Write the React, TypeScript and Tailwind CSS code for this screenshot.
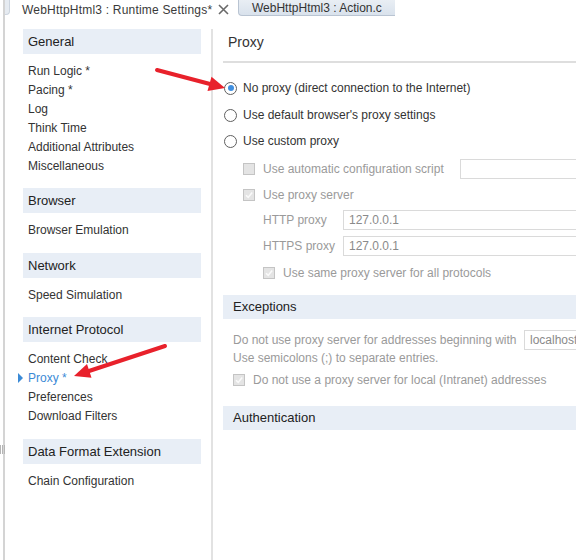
import React from "react";

const font = "font-['Liberation_Sans',Arial,sans-serif]";

function Radio({ checked, label }: { checked?: boolean; label: string }) {
  return (
    <div className="flex h-[26px] items-center pl-[1px]">
      <span className="flex h-[13px] w-[13px] shrink-0 items-center justify-center rounded-full border border-[#5f5f5f] bg-white">
        {checked && <span className="h-[6px] w-[6px] rounded-full bg-[#3f8fe0]" />}
      </span>
      <span className="ml-[6px] whitespace-nowrap text-[12px] leading-none text-[#333]">{label}</span>
    </div>
  );
}

function Check({ checked }: { checked?: boolean }) {
  return (
    <span className="flex h-[12px] w-[12px] shrink-0 items-center justify-center border border-[#c4c4c4] bg-[#e4e4e4]">
      {checked && (
        <svg width="10" height="10" viewBox="0 0 10 10">
          <path d="M2 5.2 L4.2 7.4 L8.2 2.6" fill="none" stroke="#fafafa" strokeWidth="1.6" />
        </svg>
      )}
    </span>
  );
}

function Input({ value, w }: { value?: string; w: string }) {
  return (
    <div className={`h-[20px] ${w} shrink-0 whitespace-nowrap border border-[#dadada] bg-white pl-[5px] text-[12px] leading-[18px] text-[#8a8a8a]`}>
      {value}
    </div>
  );
}

function Header({ title, cls }: { title: string; cls?: string }) {
  return (
    <div className={`flex h-[25px] items-center whitespace-nowrap bg-[#e8eef6] pl-[5px] text-[13px] text-[#222] ${cls ?? ""}`}>
      {title}
    </div>
  );
}

function Item({ label, active }: { label: string; active?: boolean }) {
  return (
    <div className={`relative h-[19px] whitespace-nowrap pl-[5px] text-[12px] leading-[19px] ${active ? "text-[#3b8ad6]" : "text-[#333]"}`}>
      {active && (
        <svg className="absolute left-[-5px] top-[4px]" width="5" height="10" viewBox="0 0 5 10">
          <path d="M0 0 L5 5 L0 10 Z" fill="#3b8ad6" />
        </svg>
      )}
      {label}
    </div>
  );
}

export default function App() {
  return (
    <div className={`relative h-[560px] w-[576px] overflow-hidden bg-white ${font}`}>
      <div className="flex h-full">
        <div className="w-[3px] shrink-0" />
        <div className="relative w-[2px] shrink-0 bg-[#d4d4d4]">
          <div className="absolute left-[-3px] top-[445px] flex gap-[1px]">
            <span className="h-[9px] w-[1px] bg-[#b5b5b5]" />
            <span className="h-[9px] w-[1px] bg-[#b5b5b5]" />
            <span className="h-[9px] w-[1px] bg-[#b5b5b5]" />
          </div>
        </div>
        <div className="flex min-w-0 flex-1 flex-col">
          {/* Tab bar */}
          <div className="flex h-[19px] shrink-0">
            <div className="h-[15px] w-[5px] rounded-br-[4px] border-b border-r border-[#cdd5df] bg-[#e6ebf1]" />
            <div className="flex w-[228px] shrink-0 items-center whitespace-nowrap pl-[12px] text-[12px] tracking-[0.2px] text-[#3a3a3a]">
              <span>WebHttpHtml3 : Runtime Settings*</span>
              <svg className="ml-[6px]" width="11" height="11" viewBox="0 0 11 11">
                <path d="M1 1 L10 10 M10 1 L1 10" stroke="#6a6a6a" strokeWidth="1.6" />
              </svg>
            </div>
            <div className="flex h-[16px] w-[157px] shrink-0 items-center whitespace-nowrap rounded-bl-[4px] border-b border-l border-[#b9c4d2] bg-gradient-to-b from-[#e9eef4] to-[#d9e2ec] pl-[13px] text-[12px] text-[#333]">
              WebHttpHtml3 : Action.c
            </div>
            <div className="flex-1" />
          </div>

          {/* Body */}
          <div className="flex min-h-0 flex-1 pt-[10px]">
            {/* Sidebar */}
            <div className="w-[208px] shrink-0 border-r-2 border-[#e2e2e2] pl-[18px] pr-[10px]">
              <Header title="General" />
              <div className="mb-[12px] mt-[8px]">
                <Item label="Run Logic *" />
                <Item label="Pacing *" />
                <Item label="Log" />
                <Item label="Think Time" />
                <Item label="Additional Attributes" />
                <Item label="Miscellaneous" />
              </div>
              <Header title="Browser" />
              <div className="mb-[13px] mt-[8px]">
                <Item label="Browser Emulation" />
              </div>
              <Header title="Network" />
              <div className="mb-[12px] mt-[8px]">
                <Item label="Speed Simulation" />
              </div>
              <Header title="Internet Protocol" />
              <div className="mb-[13px] mt-[8px]">
                <Item label="Content Check" />
                <Item label="Proxy *" active />
                <Item label="Preferences" />
                <Item label="Download Filters" />
              </div>
              <Header title="Data Format Extension" />
              <div className="mt-[8px]">
                <Item label="Chain Configuration" />
              </div>
            </div>

            {/* Right panel */}
            <div className="min-w-0 flex-1 overflow-hidden pl-[10px]">
              <div className="h-[34px] border-b-2 border-[#dedede] pl-[5px] text-[14px] leading-[26px] text-[#333]">
                Proxy
              </div>
              <div className="mt-[12px]">
                <Radio checked label="No proxy (direct connection to the Internet)" />
                <div className="mt-[1px]">
                  <Radio label="Use default browser's proxy settings" />
                </div>
                <Radio label="Use custom proxy" />
              </div>
              <div className="mt-[2px] pl-[20px] text-[12px] text-[#9a9a9a]">
                <div className="flex h-[26px] items-center">
                  <Check />
                  <span className="ml-[8px] w-[197px] shrink-0 whitespace-nowrap">Use automatic configuration script</span>
                  <Input w="w-[200px]" />
                </div>
                <div className="flex h-[25px] items-center">
                  <Check checked />
                  <span className="ml-[8px] whitespace-nowrap">Use proxy server</span>
                </div>
                <div className="flex h-[25px] items-center pl-[20px]">
                  <span className="w-[80px] shrink-0 whitespace-nowrap">HTTP proxy</span>
                  <Input value="127.0.0.1" w="w-[300px]" />
                </div>
                <div className="flex h-[27px] items-center pl-[20px]">
                  <span className="w-[80px] shrink-0 whitespace-nowrap">HTTPS proxy</span>
                  <Input value="127.0.0.1" w="w-[300px]" />
                </div>
                <div className="flex h-[27px] items-center pl-[20px]">
                  <Check checked />
                  <span className="ml-[8px] whitespace-nowrap">Use same proxy server for all protocols</span>
                </div>
              </div>

              <Header title="Exceptions" cls="mt-[9px] !pl-[10px] !h-[24px]" />
              <div className="mt-[11px] pl-[10px] text-[12px] text-[#9a9a9a]">
                <div className="flex h-[20px] items-center">
                  <span className="w-[291px] shrink-0 whitespace-nowrap">Do not use proxy server for addresses beginning with</span>
                  <Input value="localhost" w="w-[200px]" />
                </div>
                <div className="h-[16px] whitespace-nowrap leading-[16px]">Use semicolons (;) to separate entries.</div>
                <div className="mt-[2px] flex h-[24px] items-center">
                  <Check checked />
                  <span className="ml-[8px] whitespace-nowrap">Do not use a proxy server for local (Intranet) addresses</span>
                </div>
              </div>
              <Header title="Authentication" cls="mt-[14px] !pl-[10px] !h-[24px]" />
            </div>
          </div>
        </div>
      </div>

      {/* Annotation arrows */}
      <svg className="pointer-events-none absolute left-0 top-0" width="576" height="560" viewBox="0 0 576 560">
        <line x1="157" y1="70" x2="210" y2="84" stroke="#e8212b" strokeWidth="4" strokeLinecap="round" />
        <polygon points="225,88 207.5,91 211.5,76.8" fill="#e8212b" />
        <line x1="165" y1="346" x2="89" y2="371" stroke="#e8212b" strokeWidth="4" strokeLinecap="round" />
        <polygon points="74,376 87,364 91.5,377.8" fill="#e8212b" />
      </svg>
    </div>
  );
}
